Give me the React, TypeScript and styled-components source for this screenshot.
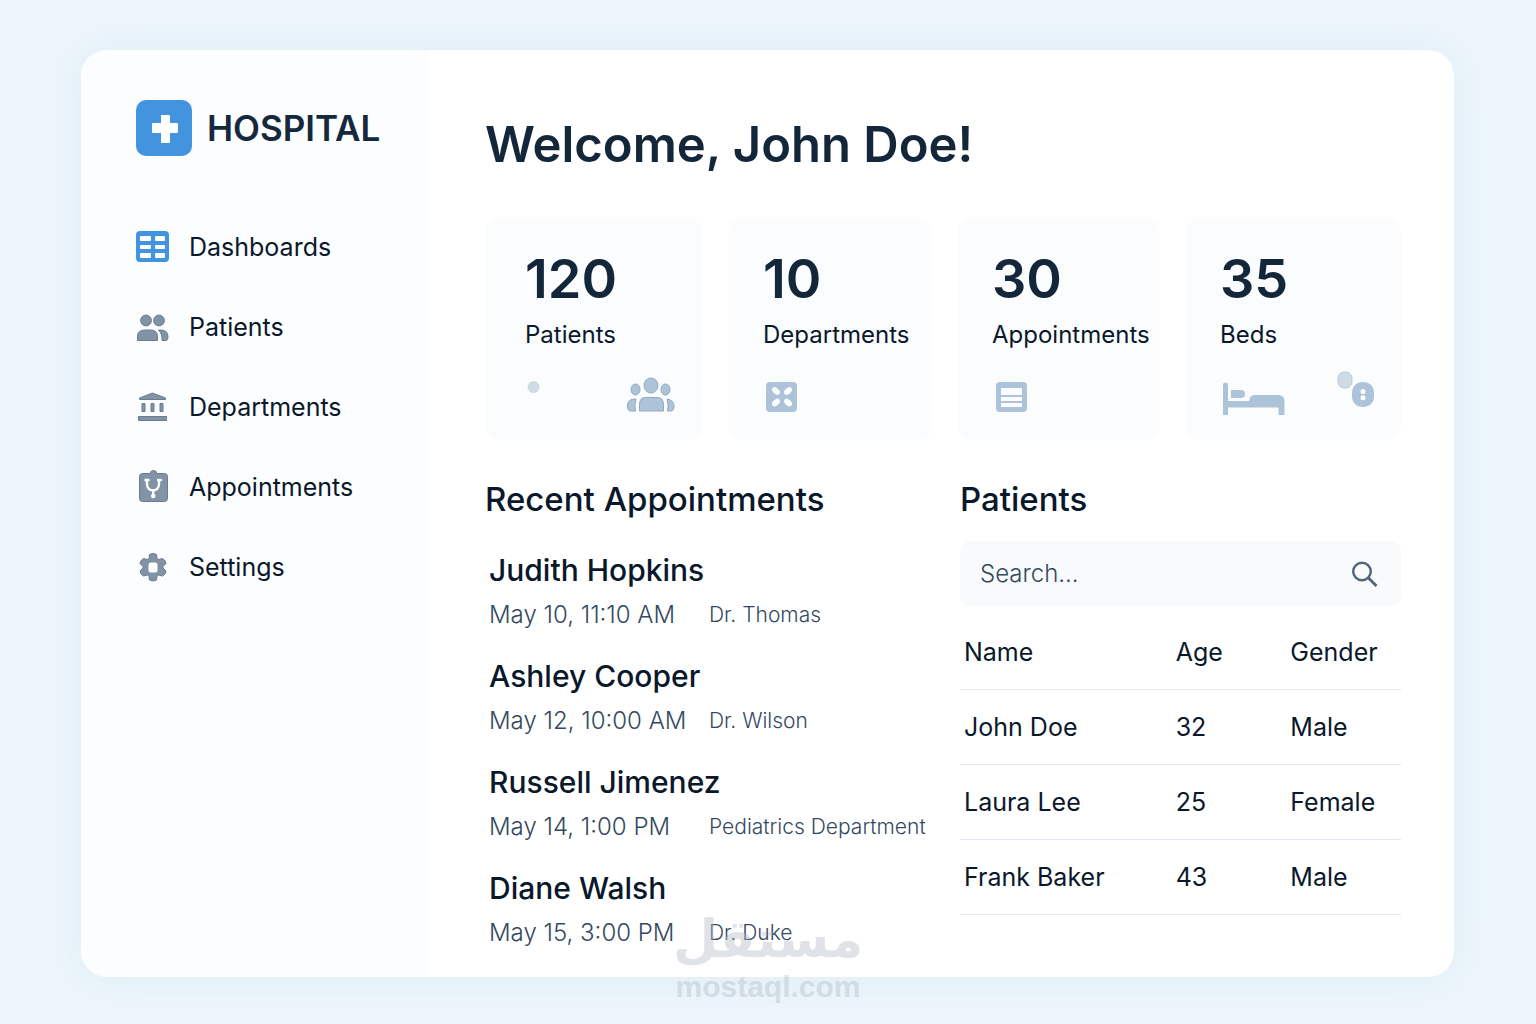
import React from "react";
import styled, { createGlobalStyle } from "styled-components";

const GlobalStyle = createGlobalStyle`
  *, *::before, *::after { box-sizing: border-box; }
  body {
    margin: 0;
    background: #eef6fd;
    color: #0a182b;
    font-family: Inter, "Liberation Sans", sans-serif;
  }
  h1, h2, h3, p, ul { margin: 0; padding: 0; }
  ul { list-style: none; }
`;

const Page = styled.div`
  position: relative;
  display: flex;
  min-height: 100vh;
  padding: 50px 82px 47px 81px;
`;

const Shell = styled.div`
  display: grid;
  grid-template-columns: 347px minmax(0, 1fr);
  flex: 1;
  border-radius: 26px;
  background: #ffffff;
  box-shadow: 0 0 44px 4px #deecf3;
  overflow: hidden;
`;

const Sidebar = styled.aside`
  padding: 50px 24px 50px 55px;
  background: #fcfdfe;
`;

const Brand = styled.a`
  display: flex;
  align-items: center;
  gap: 15px;
  color: #16283c;
  font-size: 35px;
  font-weight: 600;
  line-height: 56px;
  text-decoration: none;
`;

const Nav = styled.nav`
  margin-top: 51px;
`;

const NavLink = styled.a`
  display: flex;
  align-items: center;
  gap: 19px;
  height: 80px;
  color: #0a182b;
  font-size: 25px;
  line-height: 30px;
  text-decoration: none;
`;

const Main = styled.main`
  padding: 65px 53px 24px 57px;
`;

const Title = styled.h1`
  color: #14263a;
  font-size: 49px;
  font-weight: 600;
  line-height: 60px;
  white-space: nowrap;
`;

const Stats = styled.section`
  display: grid;
  grid-template-columns: 218fr 204fr 203fr 216fr;
  gap: 25px;
  margin-top: 44px;
`;

const StatCard = styled.article<{ $inset: number }>`
  min-width: 0;
  padding: 30px 26px 20px ${(p) => p.$inset}px;
  border-radius: 14px;
  background: #fafcfe;
`;

const StatValue = styled.p`
  color: #14263a;
  font-size: 54px;
  font-weight: 600;
  line-height: 60px;
`;

const StatLabel = styled.p`
  margin-top: 11px;
  font-size: 24px;
  line-height: 30px;
  white-space: nowrap;
`;

const StatIcons = styled.div`
  display: flex;
  justify-content: space-between;
  margin-top: 20px;

  svg { display: block; }
`;

const Columns = styled.div`
  display: grid;
  grid-template-columns: 445fr 441fr;
  gap: 30px;
  margin-top: 39px;
`;

const Section = styled.section`
  min-width: 0;
`;

const Heading = styled.h2`
  font-size: 33px;
  font-weight: 500;
  line-height: 40px;
  white-space: nowrap;
`;

const AppointmentList = styled.ul`
  display: grid;
  gap: 28px;
  margin-top: 33px;
  padding-left: 4px;
`;

const PersonName = styled.h3`
  font-size: 30px;
  font-weight: 500;
  line-height: 36px;
`;

const Meta = styled.p`
  display: grid;
  grid-template-columns: 220px 1fr;
  align-items: center;
  margin-top: 12px;
  color: #34495f;
  font-weight: 300;
  line-height: 30px;
  white-space: nowrap;
`;

const When = styled.time`
  font-size: 24px;
`;

const Who = styled.span`
  font-size: 21px;
`;

const SearchBox = styled.label`
  display: flex;
  align-items: center;
  height: 65px;
  margin-top: 22px;
  padding: 0 20px;
  border-radius: 10px;
  background: #f8fafc;
`;

const SearchInput = styled.input`
  flex: 1;
  min-width: 0;
  padding: 0;
  border: 0;
  outline: 0;
  background: transparent;
  color: #0a182b;
  font: 300 24px/30px Inter, "Liberation Sans", sans-serif;

  &::placeholder { color: #34495f; opacity: 1; }
`;

const PatientTable = styled.table`
  width: 100%;
  margin-top: 9px;
  border-collapse: separate;
  border-spacing: 0;
  table-layout: fixed;
`;

const cell = `
  height: 75px;
  padding: 0 0 0 4px;
  border-bottom: 1px solid #e1eaf1;
  font-size: 25px;
  font-weight: 400;
  line-height: 30px;
  text-align: left;
  white-space: nowrap;
`;

const HeadCell = styled.th<{ $width: string }>`
  ${cell}
  width: ${(p) => p.$width};
`;

const Cell = styled.td`
  ${cell}
`;

const Watermark = styled.div`
  position: absolute;
  left: 50%;
  bottom: 20px;
  display: flex;
  flex-direction: column;
  align-items: center;
  transform: translateX(-50%);
  color: #b5bec9;
  font-weight: 700;
  opacity: 0.42;
  pointer-events: none;
`;

const WatermarkWord = styled.span`
  font-family: "DejaVu Sans", sans-serif;
  font-size: 52px;
  line-height: 62px;
`;

const WatermarkSite = styled.span`
  font-family: "Liberation Sans", sans-serif;
  font-size: 30px;
  line-height: 34px;
`;

const SLATE = "#8293a5";
const SLATE_EDGE = "#687d92";
const MIST = "#adc3d9";

const LogoIcon = () => (
  <svg width="56" height="56" viewBox="0 0 56 56" aria-hidden="true">
    <rect width="56" height="56" rx="10" fill="#4294df" />
    <path d="M25 15h8q1 0 1 1v7h7q1 0 1 1v8q0 1-1 1h-7v9q0 1-1 1h-7q-1 0-1-1v-9h-8q-1 0-1-1v-8q0-1 1-1h8v-7q0-1 0-1z" fill="#fff" />
  </svg>
);

const DashboardsIcon = () => (
  <svg width="34" height="34" viewBox="0 0 34 34" aria-hidden="true">
    <rect y="1" width="33" height="31" rx="4" fill="#4294df" />
    <g fill="#fff">
      <rect x="4" y="6" width="11" height="5" rx="1" />
      <rect x="19" y="6" width="10" height="5" rx="1" />
      <rect x="4" y="15" width="11" height="4" rx="1" />
      <rect x="19" y="15" width="10" height="4" rx="1" />
      <rect x="4" y="23" width="11" height="5" rx="1" />
      <rect x="19" y="23" width="10" height="5" rx="1" />
    </g>
  </svg>
);

const PatientsIcon = () => (
  <svg width="34" height="34" viewBox="0 0 34 34" fill={SLATE} stroke={SLATE_EDGE} strokeWidth="1" aria-hidden="true">
    <circle cx="10" cy="10.500" r="5.400" />
    <circle cx="23" cy="10.500" r="5.400" />
    <path d="M1.500 30.500v-4q0-6.500 7-6.500h6q7 0 7 6.500v4z" />
    <path d="M22.500 20h2.500q7 .5 7 6.500 0 3-1.500 4h-4.500q.5-6.500-3.500-10.500z" />
  </svg>
);

const DepartmentsIcon = () => (
  <svg width="34" height="34" viewBox="0 0 34 34" fill={SLATE} stroke={SLATE_EDGE} strokeWidth="1" aria-hidden="true">
    <path d="M3.500 9.500v-1.500l13-5 13 5v1.500z" />
    <path d="M6 13.500h3v8h-3zM15 13.500h3v8h-3zM24 13.500h3v8h-3z" />
    <path d="M2.500 26.500h28v4h-28z" />
  </svg>
);

const AppointmentsIcon = () => (
  <svg width="34" height="34" viewBox="0 0 34 34" aria-hidden="true">
    <path
      d="M6.500 3.500h7.500q.5-3 3.500-3t3.500 3h7.500q3 0 3 3v22q0 3-3 3h-22q-3 0-3-3v-22q0-3 3-3z"
      fill={SLATE}
      stroke={SLATE_EDGE}
      strokeWidth="1"
    />
    <g fill="none" stroke="#fff" strokeWidth="2.400" strokeLinecap="round" strokeLinejoin="round">
      <path d="M9.500 10h3M22 10h3M11 10.500v4q.5 5.500 6 6 5.500-.5 6-6v-4" />
      <path d="M17.200 20.500v5" />
    </g>
    <circle cx="17.200" cy="26" r="2.300" fill="#fff" />
  </svg>
);

const SettingsIcon = () => (
  <svg width="34" height="34" viewBox="0 0 34 34" aria-hidden="true">
    <path
      d="M13.500 4.500q3.500-2 7 0l.5 4 1.500 1 4-1q3 1.500 3.500 5l-3 3v1.500l3 3q-.5 3.500-3.500 5l-4-1-1.500 1-.5 4q-3.500 2-7 0l-.5-4-1.500-1-4 1q-3-1.500-3.500-5l3-3v-1.500l-3-3q.5-3.500 3.500-5l4 1 1.500-1z"
      fill={SLATE}
      stroke={SLATE_EDGE}
      strokeWidth="1"
      strokeLinejoin="round"
    />
    <rect x="12.500" y="12.500" width="9" height="10" rx="2.500" fill="#fff" />
  </svg>
);

const DotIcon = () => (
  <svg width="18" height="50" viewBox="0 0 18 50" aria-hidden="true">
    <circle cx="8.500" cy="17" r="6" fill="#cfdae4" />
  </svg>
);

const GroupIcon = () => (
  <svg width="50" height="50" viewBox="0 0 50 50" fill={MIST} stroke="#91a9c0" strokeWidth="1" aria-hidden="true">
    <ellipse cx="24" cy="15.500" rx="7" ry="7.500" />
    <ellipse cx="8.500" cy="19.500" rx="4.500" ry="5.500" />
    <ellipse cx="38.500" cy="19.500" rx="4.500" ry="5.500" />
    <path d="M12.500 41v-6.500q0-7 6-7h11.500q6.500 0 6.500 7v6.500z" />
    <path d="M9 29q-8.500-.5-8.500 7 0 5 3 5h5q-1.500-6 .5-12z" />
    <path d="M40 29q7 1 7 7 0 5-3 5h-3.500q1.500-6-.5-12z" />
  </svg>
);

const ClinicIcon = () => (
  <svg width="36" height="50" viewBox="0 0 36 50" aria-hidden="true">
    <rect x="3" y="12" width="31" height="30" rx="4" fill={MIST} />
    <g fill="#fafcfe">
      <ellipse cx="13" cy="21" rx="4.500" ry="3" transform="rotate(40 13 21)" />
      <ellipse cx="25" cy="21" rx="4.500" ry="3" transform="rotate(-40 25 21)" />
      <ellipse cx="13" cy="32.500" rx="4.500" ry="3" transform="rotate(-40 13 32.500)" />
      <ellipse cx="25" cy="32.500" rx="4.500" ry="3" transform="rotate(40 25 32.500)" />
    </g>
  </svg>
);

const AgendaIcon = () => (
  <svg width="36" height="50" viewBox="0 0 36 50" aria-hidden="true">
    <rect x="4" y="12" width="31" height="30" rx="4" fill={MIST} />
    <g fill="#fafcfe">
      <rect x="9" y="18" width="21" height="7" />
      <rect x="9" y="27" width="21" height="4" />
      <rect x="9" y="33" width="21" height="4" />
    </g>
  </svg>
);

const BedIcon = () => (
  <svg width="66" height="50" viewBox="0 0 66 50" fill={MIST} aria-hidden="true">
    <path d="M3 15q0-2.500 2.500-2.500t2.500 2.500v16h21q1-6 5-6h24q6.500 0 6.500 6v14h-6v-7.500h-50.500v7.500h-5z" />
    <path d="M11 20h10q4 0 4 4t-4 4h-10z" />
  </svg>
);

const BadgeIcon = () => (
  <svg width="38" height="50" viewBox="0 0 38 50" aria-hidden="true">
    <rect x="1" y="2" width="14" height="16" rx="6.500" fill="#cfdae4" stroke="#b7c9d9" />
    <rect x="15" y="12" width="22" height="25" rx="10" fill={MIST} />
    <circle cx="26" cy="21.500" r="2.500" fill="#fff" />
    <circle cx="26" cy="27.700" r="2.500" fill="#fff" />
  </svg>
);

const SearchIcon = () => (
  <svg width="32" height="32" viewBox="0 0 32 32" fill="none" stroke="#51667c" aria-hidden="true">
    <circle cx="13" cy="13.500" r="8.800" strokeWidth="2.400" />
    <path d="M19.200 19.700l8.300 8.300" strokeWidth="2.800" />
  </svg>
);

const navItems = [
  { label: "Dashboards", Icon: DashboardsIcon },
  { label: "Patients", Icon: PatientsIcon },
  { label: "Departments", Icon: DepartmentsIcon },
  { label: "Appointments", Icon: AppointmentsIcon },
  { label: "Settings", Icon: SettingsIcon },
];

const stats = [
  { value: 120, label: "Patients", inset: 40, icons: [DotIcon, GroupIcon] },
  { value: 10, label: "Departments", inset: 35, icons: [ClinicIcon] },
  { value: 30, label: "Appointments", inset: 35, icons: [AgendaIcon] },
  { value: 35, label: "Beds", inset: 35, icons: [BedIcon, BadgeIcon] },
];

const appointments = [
  { name: "Judith Hopkins", when: "May 10, 11:10 AM", who: "Dr. Thomas" },
  { name: "Ashley Cooper", when: "May 12, 10:00 AM", who: "Dr. Wilson" },
  { name: "Russell Jimenez", when: "May 14, 1:00 PM", who: "Pediatrics Department" },
  { name: "Diane Walsh", when: "May 15, 3:00 PM", who: "Dr. Duke" },
];

const patients = [
  { name: "John Doe", age: 32, gender: "Male" },
  { name: "Laura Lee", age: 25, gender: "Female" },
  { name: "Frank Baker", age: 43, gender: "Male" },
];

export default function App() {
  return (
    <Page>
      <GlobalStyle />
      <Shell>
        <Sidebar>
          <Brand href="#">
            <LogoIcon />
            HOSPITAL
          </Brand>
          <Nav>
            <ul>
              {navItems.map(({ label, Icon }) => (
                <li key={label}>
                  <NavLink href={`#${label.toLowerCase()}`}>
                    <Icon />
                    {label}
                  </NavLink>
                </li>
              ))}
            </ul>
          </Nav>
        </Sidebar>
        <Main>
          <Title>Welcome, John Doe!</Title>
          <Stats>
            {stats.map(({ value, label, inset, icons }) => (
              <StatCard key={label} $inset={inset}>
                <StatValue>{value}</StatValue>
                <StatLabel>{label}</StatLabel>
                <StatIcons>
                  {icons.map((Icon, i) => (
                    <Icon key={i} />
                  ))}
                </StatIcons>
              </StatCard>
            ))}
          </Stats>
          <Columns>
            <Section>
              <Heading>Recent Appointments</Heading>
              <AppointmentList>
                {appointments.map(({ name, when, who }) => (
                  <li key={name}>
                    <PersonName>{name}</PersonName>
                    <Meta>
                      <When>{when}</When>
                      <Who>{who}</Who>
                    </Meta>
                  </li>
                ))}
              </AppointmentList>
            </Section>
            <Section>
              <Heading>Patients</Heading>
              <SearchBox>
                <SearchInput type="search" placeholder="Search..." aria-label="Search patients" />
                <SearchIcon />
              </SearchBox>
              <PatientTable>
                <thead>
                  <tr>
                    <HeadCell $width="48%">Name</HeadCell>
                    <HeadCell $width="26%">Age</HeadCell>
                    <HeadCell $width="26%">Gender</HeadCell>
                  </tr>
                </thead>
                <tbody>
                  {patients.map(({ name, age, gender }) => (
                    <tr key={name}>
                      <Cell>{name}</Cell>
                      <Cell>{age}</Cell>
                      <Cell>{gender}</Cell>
                    </tr>
                  ))}
                </tbody>
              </PatientTable>
            </Section>
          </Columns>
        </Main>
      </Shell>
      <Watermark>
        <WatermarkWord lang="ar">مستقل</WatermarkWord>
        <WatermarkSite>mostaql.com</WatermarkSite>
      </Watermark>
    </Page>
  );
}
